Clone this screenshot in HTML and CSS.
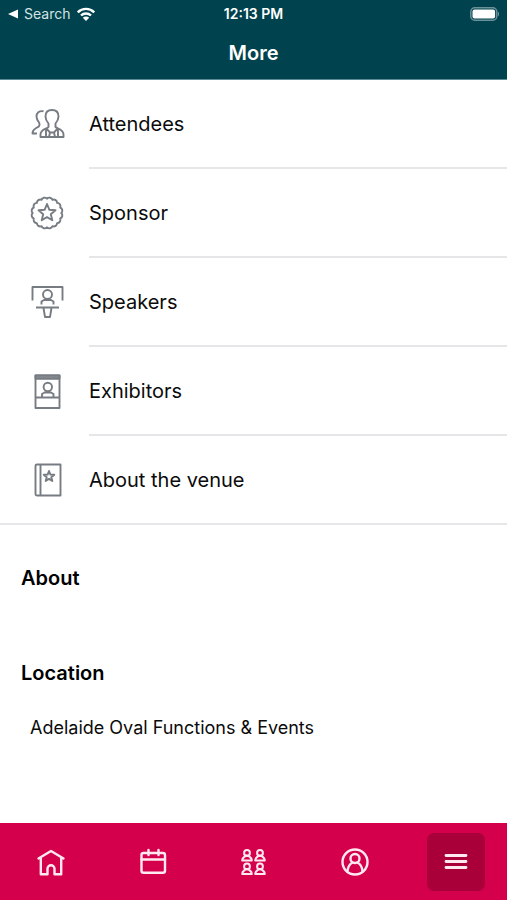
FILE: index.html
```html
<!DOCTYPE html>
<html lang="en">
<head>
<meta charset="utf-8">
<meta name="viewport" content="width=device-width, initial-scale=1">
<title>More</title>
<link rel="stylesheet" href="styles.css">
</head>
<body>
<header class="header">
  <div class="status">
    <a class="status-back" href="#">
      <svg class="back-icon" viewBox="0 0 10 10" aria-hidden="true"><path d="M0 5 10 .5v9z"/></svg>
      <span>Search</span>
      <svg class="wifi-icon" viewBox="0 0 20 14" aria-hidden="true">
        <path class="wifi-wave" d="M1.8 5.3a11.6 11.6 0 0 1 16.4 0M5 8.5a7.1 7.1 0 0 1 10 0"/>
        <path d="M10 14 6.8 10.8a4.5 4.5 0 0 1 6.4 0z"/>
      </svg>
    </a>
    <time class="status-time">12:13 PM</time>
    <svg class="battery-icon" viewBox="0 0 30 14" aria-hidden="true">
      <rect class="battery-case" x="1.8" y=".8" width="26" height="12.4" rx="4"/>
      <rect x="3.5" y="2.5" width="22.6" height="9" rx="2"/>
      <path class="battery-tip" d="M29 4.800c1.500.7 1.500 3.700 0 4.400z"/>
    </svg>
  </div>
  <h1 class="title">More</h1>
</header>

<main class="content">
  <ul class="menu">
    <li><a class="menu-item" href="#">
      <svg class="menu-icon" viewBox="0 0 36 36" aria-hidden="true">
        <path d="M16.500 9.500C16.500 5 19 3 23 3s6.500 2 6.500 6.500c0 3.200-1.300 5-3 7V20c2 2 8 2 8 7.500V30h-23v-2.500c0-5.500 6.500-5.500 8-7.500v-3.500c-1.700-2-3-3.800-3-7z"/>
        <path d="M17.500 21.700l3.500 3.800h4l3.500-3.800M17 22v8M29 22v8M21 25.500l-1 4.500M25 25.500l1 4.500M14.500 4.300c-4.500-.7-7 1.700-7 5.200 0 3 1.200 4.500 2.800 6.500.8 3.500-.8 3.500-3.800 5.500-2.200 1.300-3 2.500-3 5H8"/>
      </svg>
      <span class="menu-label">Attendees</span></a></li>
    <li><a class="menu-item" href="#">
      <svg class="menu-icon" viewBox="0 0 36 36" aria-hidden="true">
        <g transform="translate(0 -1)">
        <path d="M32.300 18A3.300 3.300 0 0 1 31.200 23.500 3.300 3.300 0 0 1 28.100 28.100 3.300 3.300 0 0 1 23.500 31.200 3.300 3.300 0 0 1 18 32.300 3.300 3.300 0 0 1 12.500 31.200 3.300 3.300 0 0 1 7.900 28.100 3.300 3.300 0 0 1 4.800 23.500 3.300 3.300 0 0 1 3.700 18 3.300 3.300 0 0 1 4.800 12.500 3.300 3.300 0 0 1 7.900 7.900 3.300 3.300 0 0 1 12.500 4.800 3.300 3.300 0 0 1 18 3.700 3.300 3.300 0 0 1 23.500 4.800 3.300 3.300 0 0 1 28.100 7.900 3.300 3.300 0 0 1 31.200 12.500 3.300 3.300 0 0 1 32.300 18z"/>
        <path d="M18 9l2.400 5.800 6.100.5-4.700 4 1.500 6-5.300-3.200-5.300 3.200 1.500-6-4.700-4 6.100-.5z"/>
        </g>
      </svg>
      <span class="menu-label">Sponsor</span></a></li>
    <li><a class="menu-item" href="#">
      <svg class="menu-icon" viewBox="0 0 36 36" aria-hidden="true">
        <path d="M3.500 15.500V2h30v13.500M7 22.500h23M12.500 19.500v-3l2.500-1.500h7l2.500 1.500v3M14.500 23l1.500 9h5l1.500-9"/>
        <circle cx="18.500" cy="9.500" r="4.500"/>
      </svg>
      <span class="menu-label">Speakers</span></a></li>
    <li><a class="menu-item" href="#">
      <svg class="menu-icon" viewBox="0 0 36 36" aria-hidden="true">
        <path class="menu-icon-band" d="M6.500 1.500h24v3h-24z"/>
        <path d="M6.500 1.500h24V34h-24zM6.500 4.500h24M6.500 23.500h24M13 23.500V20l2.500-1.500H22l2.500 1.500v3.500"/>
        <circle cx="18.800" cy="13" r="4.200"/>
      </svg>
      <span class="menu-label">Exhibitors</span></a></li>
    <li><a class="menu-item" href="#">
      <svg class="menu-icon" viewBox="0 0 36 36" aria-hidden="true">
        <path d="M8 2.500h23.500v31H8A1.500 1.500 0 0 1 6.500 32V4A1.500 1.500 0 0 1 8 2.500zM11.500 2.500v31"/>
        <path d="M20 9l1.400 3.600 3.900.2-3 2.400 1 3.800-3.300-2.100-3.300 2.100 1-3.800-3-2.400 3.900-.2z"/>
      </svg>
      <span class="menu-label">About the venue</span></a></li>
  </ul>

  <section class="info">
    <h2 class="info-title">About</h2>
  </section>
  <section class="info">
    <h2 class="info-title">Location</h2>
    <p class="info-text">Adelaide Oval Functions &amp; Events</p>
  </section>
</main>

<nav class="tabs" aria-label="Main">
  <a class="tab" href="#" aria-label="Home">
    <svg class="tab-icon" viewBox="0 0 32 32" aria-hidden="true"><path d="M3.500 12.500 16 5l12.500 7.500M5.800 11.500v16.700h6.700v-5.400a3.500 3.500 0 0 1 7 0v5.400h6.700V11.500"/></svg>
  </a>
  <a class="tab" href="#" aria-label="Schedule">
    <svg class="tab-icon" viewBox="0 0 32 32" aria-hidden="true"><rect x="5.500" y="7" width="23.500" height="19.800" rx="2"/><path d="M5.500 13.500h23.500M12.500 4v5M22.500 4v5"/></svg>
  </a>
  <a class="tab" href="#" aria-label="Community">
    <svg class="tab-icon tab-icon-fine" viewBox="0 0 32 32" aria-hidden="true">
      <defs><g id="member"><circle cx="6" cy="3.500" r="2.900"/><path d="M4.300 6C4 8 1.200 7.500 1.200 11h9.600c0-3.500-2.800-3-3.100-5z"/></g></defs>
      <use href="#member" x="4" y="3.500"/><use href="#member" x="17" y="3.500"/>
      <use href="#member" x="4" y="17"/><use href="#member" x="17" y="17"/>
    </svg>
  </a>
  <a class="tab" href="#" aria-label="Profile">
    <svg class="tab-icon" viewBox="0 0 32 32" aria-hidden="true"><circle cx="16" cy="16" r="12.500"/><circle cx="16" cy="12.500" r="4.500"/><path d="M8.500 25.500c.3-5 2.200-7.500 5-9M23.500 25.500c-.3-5-2.200-7.500-5-9"/></svg>
  </a>
  <a class="tab tab-active" href="#" aria-label="More" aria-current="page">
    <svg class="tab-icon tab-icon-bold" viewBox="0 0 32 32" aria-hidden="true"><path d="M6 9.500h20M6 15.500h20M6 21.500h20"/></svg>
  </a>
</nav>
</body>
</html>
```
FILE: styles.css
```css
* {
  box-sizing: border-box;
}

body {
  display: flex;
  flex-direction: column;
  min-height: 100vh;
  margin: 0;
  background: #fff;
  color: #0b0b0c;
  font-family: Inter, "Liberation Sans", sans-serif;
}

a {
  color: inherit;
  text-decoration: none;
}

.header {
  padding: 4px 8px 12px;
  border-bottom: 1px solid #5b8b93;
  background: #00424d;
  color: #fff;
}

.status {
  display: grid;
  grid-template-columns: 1fr auto 1fr;
  align-items: center;
  font-size: 14px;
  line-height: 20px;
}

.status-back {
  display: flex;
  align-items: center;
  gap: 6px;
  color: #d3e2e4;
}

.back-icon {
  width: 10px;
  height: 10px;
  fill: #fff;
}

.wifi-icon {
  width: 20px;
  height: 14px;
  fill: #fff;
}

.wifi-wave {
  fill: none;
  stroke: #fff;
  stroke-width: 2.4;
}

.status-time {
  font-weight: 600;
}

.battery-icon {
  justify-self: end;
  width: 30px;
  height: 14px;
  fill: #fff;
}

.battery-case {
  fill: none;
  stroke: #6b929a;
  stroke-width: 1.5;
}

.battery-tip {
  fill: #6b929a;
}

.title {
  margin: 15px 0 0;
  font-size: 20px;
  font-weight: 600;
  line-height: 28px;
  text-align: center;
}

.content {
  flex: 1;
}

.menu {
  margin: 0;
  padding: 0;
  border-bottom: 2px solid #e6e6e8;
  list-style: none;
}

.menu-item {
  display: flex;
  align-items: center;
  gap: 24px;
  padding-left: 29px;
}

.menu-icon {
  width: 36px;
  height: 36px;
  fill: none;
  stroke: #777c83;
  stroke-width: 1.9;
  stroke-linejoin: round;
}

.menu-icon-band {
  fill: #a6a9ae;
}

.menu-label {
  flex: 1;
  padding: 30px 0 29px;
  border-bottom: 2px solid #e6e6e8;
  font-size: 20px;
  line-height: 28px;
}

.menu li:last-child .menu-label {
  border-bottom: 0;
}

.info {
  padding: 39px 21px 67px;
}

.info + .info {
  padding-top: 0;
}

.info-title {
  margin: 0;
  color: #000;
  font-size: 20px;
  font-weight: 600;
  line-height: 28px;
}

.info-text {
  margin: 28px 0 0;
  padding-left: 9px;
  font-size: 18px;
  line-height: 26px;
}

.tabs {
  display: grid;
  grid-template-columns: repeat(5, 1fr);
  justify-items: center;
  padding: 10px 0 9px;
  background: #d5004b;
}

.tab {
  display: grid;
  place-items: center;
  width: 58px;
  height: 58px;
  border-radius: 7px;
}

.tab-active {
  background: #a90039;
}

.tab-icon {
  width: 32px;
  height: 32px;
  fill: none;
  stroke: #ffe9f1;
  stroke-width: 2.4;
  stroke-linecap: round;
  stroke-linejoin: round;
}

.tab-icon-fine {
  stroke-width: 2;
}

.tab-icon-bold {
  stroke-width: 2.8;
}
```
